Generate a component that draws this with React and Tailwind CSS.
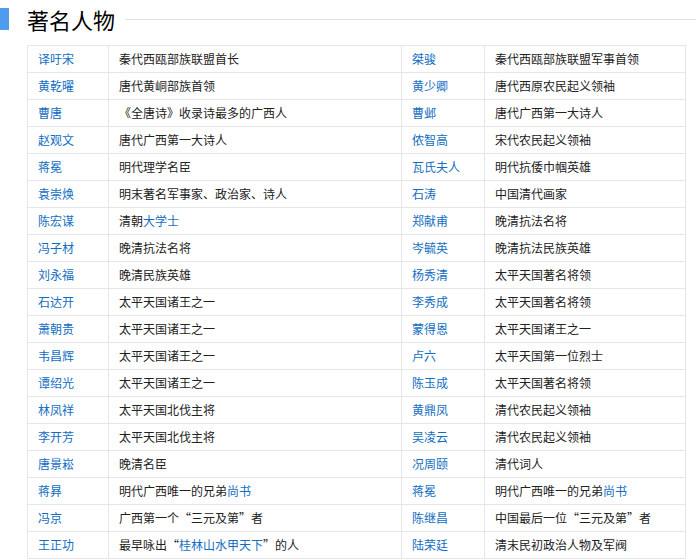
const rows = [
  ["译吁宋", "秦代西瓯部族联盟首长", "桀骏", "秦代西瓯部族联盟军事首领"],
  ["黄乾曜", "唐代黄峒部族首领", "黄少卿", "唐代西原农民起义领袖"],
  ["曹唐", "《全唐诗》收录诗最多的广西人", "曹邺", "唐代广西第一大诗人"],
  ["赵观文", "唐代广西第一大诗人", "侬智高", "宋代农民起义领袖"],
  ["蒋冕", "明代理学名臣", "瓦氏夫人", "明代抗倭巾帼英雄"],
  ["袁崇焕", "明末著名军事家、政治家、诗人", "石涛", "中国清代画家"],
  ["陈宏谋", ["清朝", { link: "大学士" }], "郑献甫", "晚清抗法名将"],
  ["冯子材", "晚清抗法名将", "岑毓英", "晚清抗法民族英雄"],
  ["刘永福", "晚清民族英雄", "杨秀清", "太平天国著名将领"],
  ["石达开", "太平天国诸王之一", "李秀成", "太平天国著名将领"],
  ["萧朝贵", "太平天国诸王之一", "蒙得恩", "太平天国诸王之一"],
  ["韦昌辉", "太平天国诸王之一", "卢六", "太平天国第一位烈士"],
  ["谭绍光", "太平天国诸王之一", "陈玉成", "太平天国著名将领"],
  ["林凤祥", "太平天国北伐主将", "黄鼎凤", "清代农民起义领袖"],
  ["李开芳", "太平天国北伐主将", "吴凌云", "清代农民起义领袖"],
  ["唐景崧", "晚清名臣", "况周颐", "清代词人"],
  ["蒋昪", ["明代广西唯一的兄弟", { link: "尚书" }], "蒋冕", ["明代广西唯一的兄弟", { link: "尚书" }]],
  ["冯京", "广西第一个“三元及第”者", "陈继昌", "中国最后一位“三元及第”者"],
  ["王正功", ["最早咏出“", { link: "桂林山水甲天下" }, "”的人"], "陆荣廷", "清末民初政治人物及军阀"],
];

const Desc = ({ v }) =>
  Array.isArray(v)
    ? v.map((p, i) =>
        typeof p === "string" ? (
          <span key={i}>{p}</span>
        ) : (
          <span key={i} className="text-[#136ec2]">{p.link}</span>
        )
      )
    : v;

export default function App() {
  return (
    <div
      className="w-[696px] h-[560px] overflow-hidden bg-white text-[#333]"
      style={{ fontFamily: '"Noto Sans CJK SC", "Noto Sans", sans-serif' }}
    >
      <div className="flex items-center h-[36px] pt-[2px]">
        <div className="w-[9px] h-[22px] bg-[#4f9cee]" />
        <h2 className="ml-[18px] text-[22px] leading-none text-black">著名人物</h2>
        <div className="flex-1 ml-[10px] h-px bg-[#e0e0e0]" />
      </div>
      <table className="ml-[27px] mt-[9px] w-[658px] border-collapse text-[12px] table-fixed">
        <colgroup>
          <col className="w-[81px]" />
          <col className="w-[293px]" />
          <col className="w-[83px]" />
          <col className="w-[201px]" />
        </colgroup>
        <tbody>
          {rows.map((r, i) => (
            <tr key={i} className="h-[27px]">
              <td className="border border-[#e6e6e6] pl-[10px] text-[#136ec2]">{r[0]}</td>
              <td className="border border-[#e6e6e6] pl-[10px] text-[#222]"><Desc v={r[1]} /></td>
              <td className="border border-[#e6e6e6] pl-[10px] text-[#136ec2]">{r[2]}</td>
              <td className="border border-[#e6e6e6] pl-[10px] text-[#222]"><Desc v={r[3]} /></td>
            </tr>
          ))}
        </tbody>
      </table>
    </div>
  );
}
